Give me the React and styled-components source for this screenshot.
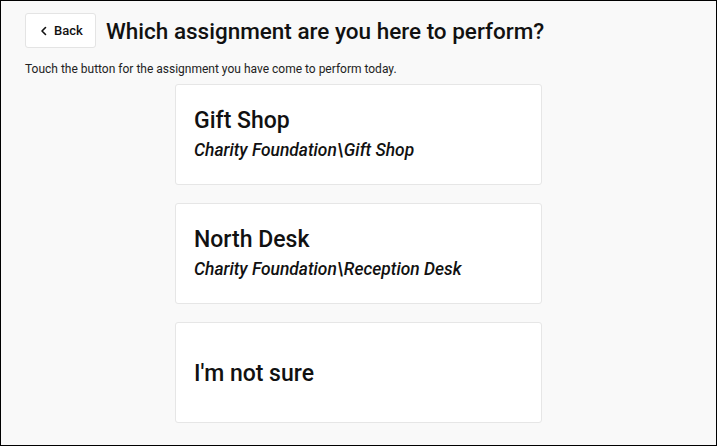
import React from "react";
import styled, { createGlobalStyle } from "styled-components";

const Global = createGlobalStyle`
  html, body { margin: 0; padding: 0; }
  body { font-family: Roboto, "Noto Sans", sans-serif; background: #f9f9f9; color: #111; }
  * { box-sizing: border-box; }
`;

const Page = styled.div`
  width: 717px;
  height: 446px;
  border: 1px solid #000;
  background: #f9f9f9;
  padding: 12px 24px 0;
  overflow: hidden;
`;

const Header = styled.div`
  display: flex;
  align-items: center;
  gap: 10px;
`;

const BackButton = styled.button`
  display: flex;
  align-items: center;
  gap: 6px;
  width: 71px;
  height: 35px;
  padding: 0 0 0 14px;
  background: #fff;
  border: 1px solid #e4e4e4;
  border-radius: 3px;
  font-family: Roboto, sans-serif;
  font-size: 13px;
  font-weight: 500;
  color: #111;
  cursor: pointer;
`;

const Title = styled.h1`
  margin: 0;
  font-size: 22.5px;
  font-weight: 500;
  color: #111;
  letter-spacing: 0;
`;

const Hint = styled.p`
  margin: 14px 0 0;
  font-size: 12px;
  color: #222;
`;

const List = styled.div`
  display: flex;
  flex-direction: column;
  align-items: center;
  gap: 18px;
  margin-top: 8px;
`;

const Card = styled.button`
  width: 367px;
  height: 101px;
  background: #fff;
  border: 1px solid #e6e6e6;
  border-radius: 3px;
  padding: 0 18px;
  display: flex;
  flex-direction: column;
  justify-content: center;
  align-items: flex-start;
  text-align: left;
  font-family: Roboto, sans-serif;
  color: #111;
  cursor: pointer;
`;

const CardTitle = styled.div`
  font-size: 23px;
  font-weight: 500;
  line-height: 26px;
  margin-top: ${(p) => (p.$solo ? "3px" : "-2px")};
`;

const CardSub = styled.div`
  font-size: 17.4px;
  font-style: italic;
  font-weight: 500;
  line-height: 20px;
  margin-top: 6px;
`;

const Chevron = () => (
  <svg width="8" height="10" viewBox="0 0 8 10" fill="none">
    <path d="M5.5 1.5L2 5l3.5 3.5" stroke="#111" strokeWidth="1.6" strokeLinecap="round" strokeLinejoin="round" />
  </svg>
);

const items = [
  { title: "Gift Shop", sub: "Charity Foundation\\Gift Shop" },
  { title: "North Desk", sub: "Charity Foundation\\Reception Desk" },
  { title: "I'm not sure" },
];

export default function App() {
  return (
    <>
      <Global />
      <Page>
        <Header>
          <BackButton>
            <Chevron />
            Back
          </BackButton>
          <Title>Which assignment are you here to perform?</Title>
        </Header>
        <Hint>Touch the button for the assignment you have come to perform today.</Hint>
        <List>
          {items.map((it) => (
            <Card key={it.title}>
              <CardTitle $solo={!it.sub}>{it.title}</CardTitle>
              {it.sub && <CardSub>{it.sub}</CardSub>}
            </Card>
          ))}
        </List>
      </Page>
    </>
  );
}
